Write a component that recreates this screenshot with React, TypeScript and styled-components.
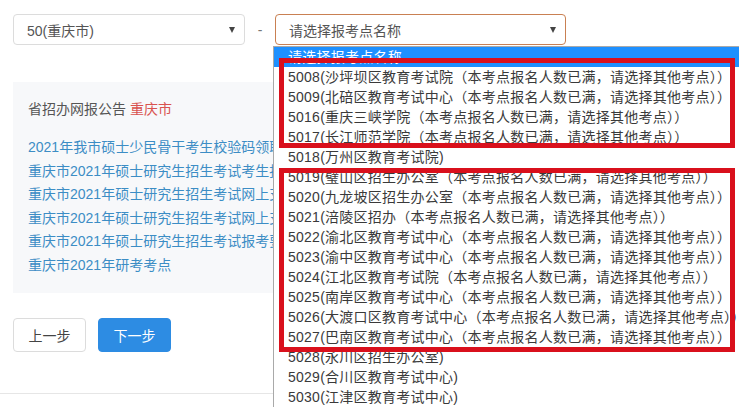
import React from "react";
import styled, { createGlobalStyle } from "styled-components";

const Global = createGlobalStyle`
  html, body { margin: 0; padding: 0; background: #fff; overflow: hidden; }
  body { font-family: "Liberation Sans", "Noto Sans CJK SC", sans-serif; font-size: 14px; color: #555; }
`;

const Page = styled.div`
  position: relative;
  width: 739px;
  height: 407px;
  overflow: hidden;
`;

const Content = styled.div`
  padding: 14px 13px 0 13px;
`;

const SelectRow = styled.div`
  display: flex;
  align-items: center;
`;

const SelectBox = styled.div<{ $w: number; $focus?: boolean }>`
  box-sizing: border-box;
  width: ${(p) => p.$w}px;
  height: 31px;
  border: 1px solid ${(p) => (p.$focus ? "#c98052" : "#dcdcdc")};
  border-radius: 4px;
  display: flex;
  align-items: center;
  justify-content: space-between;
  padding: 0 7px 0 13px;
  color: #555;
  font-size: 14px;
  background: #fff;
`;

const Arrow = styled.span`
  width: 0;
  height: 0;
  border-left: 3px solid transparent;
  border-right: 3px solid transparent;
  border-top: 6px solid #444;
  margin-right: 2px;
`;

const Dash = styled.span`
  width: 30px;
  text-align: center;
  color: #777;
  font-size: 14px;
`;

const Panel = styled.div`
  margin-top: 37px;
  width: 520px;
  background: #f7f8fa;
  padding: 17px 15px 16px 15px;
  box-sizing: border-box;
`;

const Heading = styled.div`
  line-height: 20px;
  color: #555;
  font-size: 14px;
`;

const City = styled.span`
  color: #d9534f;
`;

const LinkList = styled.div`
  margin-top: 17px;
  display: flex;
  flex-direction: column;
`;

const LinkItem = styled.a`
  display: block;
  line-height: 23.5px;
  color: #3c8dc5;
  white-space: nowrap;
  text-decoration: none;
  font-size: 14px;
`;

const Buttons = styled.div`
  margin-top: 25px;
  display: flex;
  gap: 12px;
`;

const Btn = styled.button<{ $primary?: boolean }>`
  width: 73px;
  height: 34px;
  border-radius: 4px;
  font-family: inherit;
  font-size: 14px;
  border: 1px solid ${(p) => (p.$primary ? "#2d8ce3" : "#dcdcdc")};
  background: ${(p) => (p.$primary ? "#2d8ce3" : "#fff")};
  color: ${(p) => (p.$primary ? "#fff" : "#444")};
  padding: 0;
`;

const Rule = styled.div`
  margin-top: 41px;
  border-top: 1px solid #e6e6e6;
`;

const Dropdown = styled.div`
  position: absolute;
  left: 273px;
  top: 46px;
  width: 480px;
  height: 400px;
  background: #fff;
  border-left: 1px solid #a9a9a9;
  border-top: 1px solid #a9a9a9;
`;

const Option = styled.div<{ $active?: boolean }>`
  height: 20px;
  line-height: 20px;
  padding-left: 14px;
  white-space: nowrap;
  font-size: 14px;
  letter-spacing: 0.25px;
  color: ${(p) => (p.$active ? "#fff" : "#3a3a3a")};
  background: ${(p) => (p.$active ? "#1e90ff" : "transparent")};
`;

const Mark = styled.div<{ $top: number; $h: number }>`
  position: absolute;
  left: 279px;
  width: 456px;
  box-sizing: border-box;
  border: 5px solid #d9101c;
  top: ${(p) => p.$top}px;
  height: ${(p) => p.$h}px;
`;

const FULL = "（本考点报名人数已满，请选择其他考点））";

const options: string[] = [
  "5008(沙坪坝区教育考试院" + FULL,
  "5009(北碚区教育考试中心" + FULL,
  "5016(重庆三峡学院" + FULL,
  "5017(长江师范学院" + FULL,
  "5018(万州区教育考试院)",
  "5019(璧山区招生办公室" + FULL,
  "5020(九龙坡区招生办公室" + FULL,
  "5021(涪陵区招办" + FULL,
  "5022(渝北区教育考试中心" + FULL,
  "5023(渝中区教育考试中心" + FULL,
  "5024(江北区教育考试院" + FULL,
  "5025(南岸区教育考试中心" + FULL,
  "5026(大渡口区教育考试中心" + FULL,
  "5027(巴南区教育考试中心" + FULL,
  "5028(永川区招生办公室)",
  "5029(合川区教育考试中心)",
  "5030(江津区教育考试中心)",
];

const links = [
  "2021年我市硕士少民骨干考生校验码领取通知",
  "重庆市2021年硕士研究生招生考试考生报名须知",
  "重庆市2021年硕士研究生招生考试网上支付说明",
  "重庆市2021年硕士研究生招生考试网上支付公告",
  "重庆市2021年硕士研究生招生考试报考要求",
  "重庆市2021年研考考点",
];

export default function App() {
  return (
    <Page>
      <Global />
      <Content>
        <SelectRow>
          <SelectBox $w={232}>
            <span>50(重庆市)</span>
            <Arrow />
          </SelectBox>
          <Dash>-</Dash>
          <SelectBox $w={291} $focus>
            <span>请选择报考点名称</span>
            <Arrow />
          </SelectBox>
        </SelectRow>
        <Panel>
          <Heading>
            省招办网报公告 <City>重庆市</City>
          </Heading>
          <LinkList>
            {links.map((l) => (
              <LinkItem key={l} href="#">
                {l}
              </LinkItem>
            ))}
          </LinkList>
        </Panel>
        <Buttons>
          <Btn>上一步</Btn>
          <Btn $primary>下一步</Btn>
        </Buttons>
      </Content>
      <Rule />
      <Dropdown>
        <Option $active>请选择报考点名称</Option>
        {options.map((o) => (
          <Option key={o}>{o}</Option>
        ))}
      </Dropdown>
      <Mark $top={58} $h={90} />
      <Mark $top={168} $h={184} />
    </Page>
  );
}
